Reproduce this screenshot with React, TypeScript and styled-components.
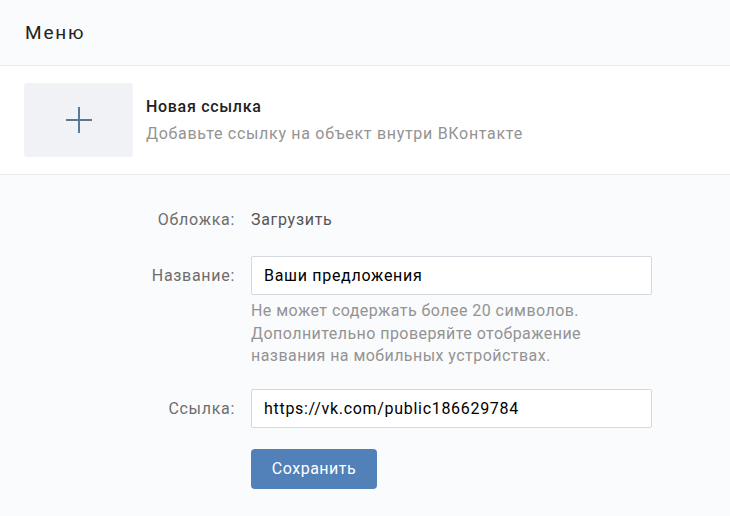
import * as React from "react";
import styled, { createGlobalStyle } from "styled-components";

const GlobalStyle = createGlobalStyle`
  body {
    margin: 0;
    background: #fafbfc;
    font-family: Roboto, "Open Sans", sans-serif;
    -webkit-font-smoothing: antialiased;
  }
`;

type FieldProps = {
  label?: string;
  lineHeight?: number;
  children: React.ReactNode;
};

const Field: React.FC<FieldProps> = ({ label, lineHeight = 39, children }) => (
  <StyledRow $lineHeight={lineHeight}>
    <StyledLabel>{label}</StyledLabel>
    <StyledControl>{children}</StyledControl>
  </StyledRow>
);

export default function App() {
  return (
    <>
      <GlobalStyle />
      <StyledPage>
        <StyledHeader>Меню</StyledHeader>
        <StyledNewLink>
          <StyledAddTile>
            <svg width="28" height="28" viewBox="0 0 28 28">
              <path
                d="M14 1v26M1 14h26"
                stroke="#587a96"
                strokeWidth="2"
                fill="none"
              />
            </svg>
          </StyledAddTile>
          <div>
            <StyledItemTitle>Новая ссылка</StyledItemTitle>
            <StyledItemText>Добавьте ссылку на объект внутри ВКонтакте</StyledItemText>
          </div>
        </StyledNewLink>
        <StyledForm>
          <Field label="Обложка:" lineHeight={30}>
            <StyledUpload>Загрузить</StyledUpload>
          </Field>
          <Field label="Название:">
            <StyledInput defaultValue="Ваши предложения" />
            <StyledHint>
              Не может содержать более 20 символов.
              <br />
              Дополнительно проверяйте отображение
              <br />
              названия на мобильных устройствах.
            </StyledHint>
          </Field>
          <Field label="Ссылка:">
            <StyledInput defaultValue="https://vk.com/public186629784" />
          </Field>
          <Field>
            <StyledButton>Сохранить</StyledButton>
          </Field>
        </StyledForm>
      </StyledPage>
    </>
  );
}

const StyledPage = styled.div`
  width: 730px;
  height: 516px;
  overflow: hidden;
  background: #fafbfc;
  font-size: 16px;
  letter-spacing: 0.7px;
`;

const StyledHeader = styled.div`
  height: 65px;
  padding: 0 25px;
  display: flex;
  align-items: center;
  font-size: 19px;
  letter-spacing: 1.8px;
  color: #222;
  border-bottom: 1px solid #e7e8ec;
`;

const StyledNewLink = styled.div`
  display: flex;
  align-items: center;
  gap: 13px;
  padding: 17px 24px;
  background: #fff;
  border-bottom: 1px solid #e7e8ec;
`;

const StyledAddTile = styled.div`
  width: 109px;
  height: 74px;
  display: flex;
  align-items: center;
  justify-content: center;
  background: #f0f2f5;
  border-radius: 3px;
`;

const StyledItemTitle = styled.div`
  font-weight: 500;
  color: #222;
  line-height: 20px;
`;

const StyledItemText = styled.div`
  margin-top: 7px;
  color: #939393;
  line-height: 20px;
`;

const StyledForm = styled.div`
  display: flex;
  flex-direction: column;
  gap: 21px;
  padding-top: 30px;
`;

const StyledRow = styled.div<{ $lineHeight: number }>`
  display: grid;
  grid-template-columns: 235px 401px;
  column-gap: 16px;
  align-items: start;
  line-height: ${(p) => p.$lineHeight}px;
`;

const StyledLabel = styled.div`
  text-align: right;
  color: #6d6d6d;
`;

const StyledControl = styled.div`
  display: flex;
  flex-direction: column;
  align-items: flex-start;
`;

const StyledUpload = styled.div`
  color: #555;
`;

const StyledInput = styled.input`
  box-sizing: border-box;
  width: 401px;
  height: 39px;
  padding: 0 12px;
  border: 1px solid #d3d9de;
  border-radius: 2px;
  background: #fff;
  font-family: Roboto, "Open Sans", sans-serif;
  font-size: 16px;
  letter-spacing: 0.7px;
  color: #000;
  outline: none;
`;

const StyledHint = styled.div`
  margin-top: 5px;
  line-height: 22.5px;
  letter-spacing: 0.45px;
  color: #939393;
`;

const StyledButton = styled.button`
  width: 126px;
  height: 40px;
  border: none;
  border-radius: 4px;
  background: #5181b8;
  color: #fff;
  font-family: Roboto, "Open Sans", sans-serif;
  font-size: 16px;
  letter-spacing: 0.5px;
`;
